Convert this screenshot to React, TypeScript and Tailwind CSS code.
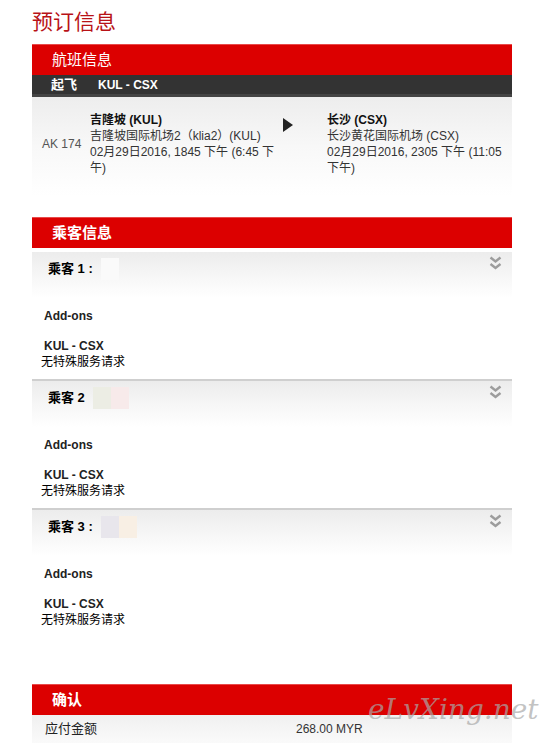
interface Passenger {
  label: string;
  blur: string[];
}

const passengers: Passenger[] = [
  { label: '乘客 1 :', blur: ['bg-[#fafafa]'] },
  { label: '乘客 2', blur: ['bg-[#ecede4]', 'bg-[#f7eaea]'] },
  { label: '乘客 3 :', blur: ['bg-[#e8e6ec]', 'bg-[#f8efe4]'] },
];

const RedBar = ({ title, bold }: { title: string; bold?: boolean }) => (
  <div className="h-[31px] bg-[#dc0000] flex items-center pl-[20px] border-t border-[#e84a4a]">
    <span className={`text-[15px] text-white ${bold ? 'font-bold' : ''}`}>{title}</span>
  </div>
);

const DoubleChevron = () => (
  <svg width="13" height="15" viewBox="0 0 13 15" className="mt-[-2px]">
    <path d="M1.5 1.5 L6.5 5.5 L11.5 1.5" fill="none" stroke="#9c9c9c" strokeWidth="2.4" />
    <path d="M1.5 8 L6.5 12 L11.5 8" fill="none" stroke="#9c9c9c" strokeWidth="2.4" />
  </svg>
);

const PassengerBlock = ({ p, last }: { p: Passenger; last: boolean }) => (
  <div className={last ? 'border-b-2 border-transparent' : 'border-b-2 border-[#cfcfcf]'}>
    <div className="h-[46px] bg-gradient-to-b from-[#ececec] via-[#f6f6f6] to-white flex items-start justify-between pt-[6px] pl-[16px] pr-[10px]">
      <div className="flex items-center">
        <span className="text-[13px] font-bold text-black">{p.label}</span>
        <div className="flex ml-[8px] h-[22px]">
          {p.blur.map((c, i) => (
            <div key={i} className={`w-[18px] h-[22px] ${c}`} />
          ))}
        </div>
      </div>
      <DoubleChevron />
    </div>
    <div className="pl-[12px] pt-[10px] pb-[9px] text-[12px] text-black">
      <div className="font-bold text-[#222]">Add-ons</div>
      <div className="mt-[14px] text-[#222] font-bold">KUL - CSX</div>
      <div className="-ml-[3px]">无特殊服务请求</div>
    </div>
  </div>
);

export default function App() {
  return (
    <div
      className="relative w-[547px] h-[747px] overflow-hidden bg-white text-[12px] leading-[16px] text-[#222]"
      style={{ fontFamily: '"Liberation Sans", Arial, "Noto Sans CJK SC", sans-serif' }}
    >
      <h1
        className="pl-[32px] pt-[8px] text-[21px] leading-[28px] text-[#b81217]"
        style={{ fontFamily: '"Liberation Serif", "Noto Sans CJK SC", serif' }}
      >
        预订信息
      </h1>

      <div className="ml-[32px] w-[480px] mt-[8px]">
        <RedBar title="航班信息" />
        <div className="h-[22px] bg-[#333333] border-b-[3px] border-[#444] flex items-center pl-[19px] gap-[21px]">
          <span className="text-white font-bold text-[13px]">起飞</span>
          <span className="text-white font-bold text-[12px]">KUL - CSX</span>
        </div>
        <div className="bg-gradient-to-b from-[#ededed] via-[#f8f8f8] to-white pt-[15px] pb-[20px] flex items-start">
          <div className="w-[58px] pl-[10px] pt-[24px] text-[#555]">AK 174</div>
          <div className="w-[185px] text-[#333]">
            <div className="font-bold text-[#111]">吉隆坡 (KUL)</div>
            <div>吉隆坡国际机场2（klia2）(KUL)</div>
            <div>02月29日2016, 1845 下午 (6:45 下午)</div>
          </div>
          <div className="w-[52px] pl-[8px] pt-[6px]">
            <svg width="10" height="14" viewBox="0 0 10 14">
              <path d="M0 0 L10 7 L0 14 Z" fill="#222" />
            </svg>
          </div>
          <div className="w-[180px] text-[#333]">
            <div className="font-bold text-[#111]">长沙 (CSX)</div>
            <div>长沙黄花国际机场 (CSX)</div>
            <div>02月29日2016, 2305 下午 (11:05 下午)</div>
          </div>
        </div>
      </div>

      <div className="ml-[32px] w-[480px] mt-[21px]">
        <RedBar title="乘客信息" bold />
        <div className="mt-[4px]">
          {passengers.map((p, i) => (
            <PassengerBlock key={i} p={p} last={i === passengers.length - 1} />
          ))}
        </div>
      </div>

      <div className="ml-[32px] w-[480px] mt-[45px]">
        <RedBar title="确认" bold />
        <div className="h-[28px] bg-gradient-to-b from-[#f0f0f0] to-[#fafafa] flex items-center pl-[13px]">
          <span className="w-[251px] text-[13px]">应付金额</span>
          <span className="text-[#333]">268.00 MYR</span>
        </div>
      </div>

      <div
        className="absolute left-[368px] top-[692px] text-[28px] leading-[36px] italic text-[#a8a8a8]/70"
        style={{ fontFamily: '"DejaVu Serif", serif' }}
      >
        eLvXing.net
      </div>
    </div>
  );
}
